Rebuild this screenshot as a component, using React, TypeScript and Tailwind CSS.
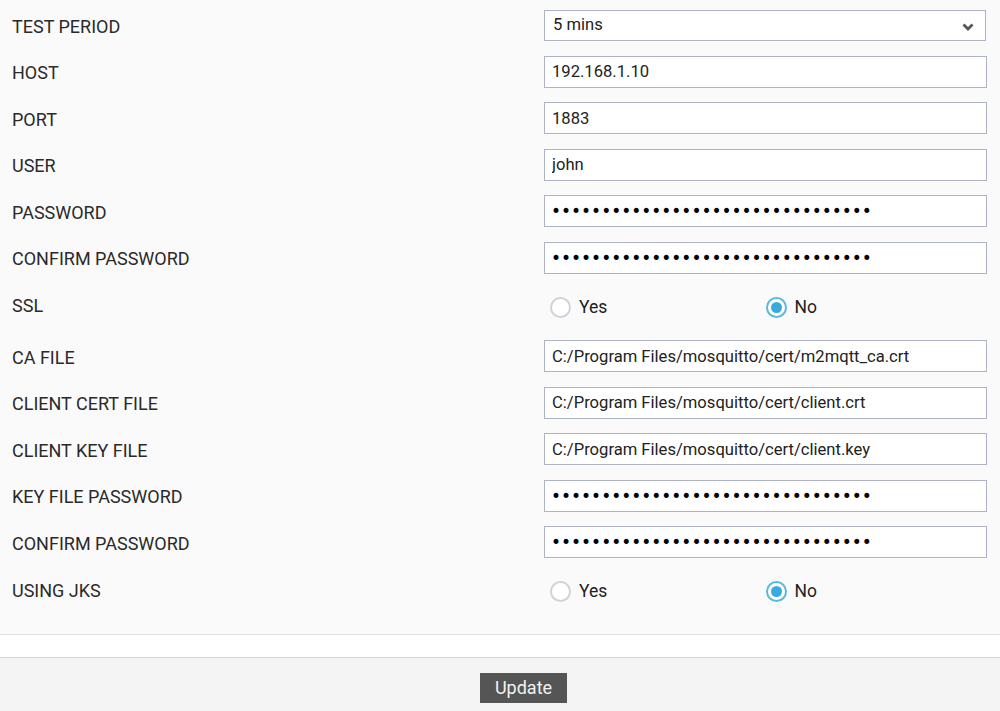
import React, { useState } from "react";

type Row =
  | { label: string; kind: "select"; value: string }
  | { label: string; kind: "text"; value: string }
  | { label: string; kind: "password"; value: string }
  | { label: string; kind: "radio"; value: "yes" | "no" };

const secret = "secretpassword1234567890abcdefgh";

const rows: Row[] = [
  { label: "TEST PERIOD", kind: "select", value: "5 mins" },
  { label: "HOST", kind: "text", value: "192.168.1.10" },
  { label: "PORT", kind: "text", value: "1883" },
  { label: "USER", kind: "text", value: "john" },
  { label: "PASSWORD", kind: "password", value: secret },
  { label: "CONFIRM PASSWORD", kind: "password", value: secret },
  { label: "SSL", kind: "radio", value: "no" },
  { label: "CA FILE", kind: "text", value: "C:/Program Files/mosquitto/cert/m2mqtt_ca.crt" },
  { label: "CLIENT CERT FILE", kind: "text", value: "C:/Program Files/mosquitto/cert/client.crt" },
  { label: "CLIENT KEY FILE", kind: "text", value: "C:/Program Files/mosquitto/cert/client.key" },
  { label: "KEY FILE PASSWORD", kind: "password", value: secret },
  { label: "CONFIRM PASSWORD", kind: "password", value: secret },
  { label: "USING JKS", kind: "radio", value: "no" },
];

function Radio({ checked, label, onClick }: { checked: boolean; label: string; onClick: () => void }) {
  return (
    <button type="button" onClick={onClick} className="flex items-center gap-[8px]">
      <span
        className={`w-[21px] h-[21px] rounded-full border-2 bg-white flex items-center justify-center ${
          checked ? "border-[#5ab8e4]" : "border-[#cfd3da]"
        }`}
      >
        {checked && <span className="w-[11px] h-[11px] rounded-full bg-[#3aa9de]" />}
      </span>
      <span className="text-[17.5px] text-[#222]">{label}</span>
    </button>
  );
}

function Field({ row }: { row: Row }) {
  const [radio, setRadio] = useState(row.kind === "radio" ? row.value : "no");

  if (row.kind === "select") {
    return (
      <div className="relative w-[442px] h-[31px] border border-[#adb3c4] bg-white">
        <select
          defaultValue={row.value}
          className="appearance-none w-full h-full pl-[8px] pr-8 text-[16.6px] text-[#222] bg-transparent outline-none"
        >
          <option>1 min</option>
          <option>5 mins</option>
          <option>10 mins</option>
          <option>30 mins</option>
        </select>
        <svg
          viewBox="0 0 12 8"
          className="absolute right-[11px] top-[12px] w-[12px] h-[8px] pointer-events-none"
        >
          <path d="M1.5 1.5 L6 6 L10.5 1.5" fill="none" stroke="#555" strokeWidth="2.8" />
        </svg>
      </div>
    );
  }

  if (row.kind === "radio") {
    return (
      <div className="grid grid-cols-2 w-[443px]">
        <div className="pl-[6px]">
          <Radio checked={radio === "yes"} label="Yes" onClick={() => setRadio("yes")} />
        </div>
        <div>
          <Radio checked={radio === "no"} label="No" onClick={() => setRadio("no")} />
        </div>
      </div>
    );
  }

  if (row.kind === "password") {
    return (
      <input
        type="password"
        defaultValue={row.value}
        className="w-[443px] h-[32px] border border-[#adb3c4] bg-white px-[6px] text-[17px] text-black font-['DejaVu_Sans',sans-serif] outline-none"
      />
    );
  }

  return (
    <input
      type="text"
      defaultValue={row.value}
      className="w-[443px] h-[32px] border border-[#adb3c4] bg-white px-[7px] text-[16.6px] text-[#222] outline-none"
    />
  );
}

export default function App() {
  return (
    <div className="w-full h-[711px] flex flex-col bg-[#f4f4f4] font-['Roboto',sans-serif]">
      <div className="bg-[#fafafa] pt-[2px] pb-[16px] pl-[12px] border-b border-[#e0e0e0]">
        {rows.map((row, i) => (
          <div
            key={i}
            className={`flex items-center ${row.kind === "radio" ? "h-[52px]" : "h-[46.5px]"}`}
          >
            <div
              className={`w-[532px] text-[18px] text-[#2a2a2a] ${
                row.kind === "radio" ? "pb-[3px]" : "pt-[2px]"
              }`}
            >
              {row.label}
            </div>
            <Field row={row} />
          </div>
        ))}
      </div>
      <div className="h-[23px] bg-white border-b border-[#d4d4d4]" />
      <div className="flex justify-center pt-[15px] pl-[47px]">
        <button className="w-[87px] h-[30px] bg-[#555555] text-[#f2f2f2] text-[18px]">Update</button>
      </div>
    </div>
  );
}
